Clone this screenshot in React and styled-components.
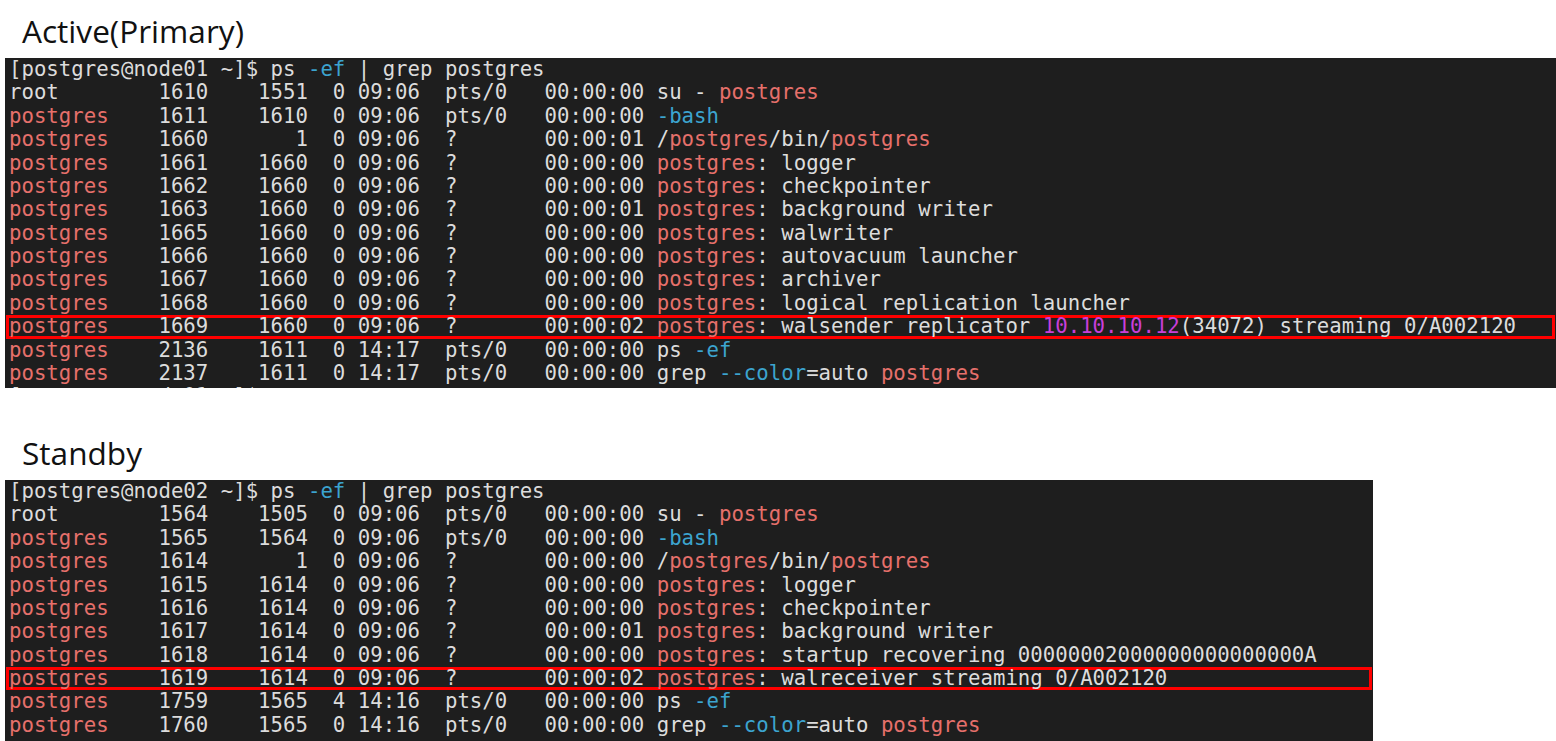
import React from 'react'
import styled, {createGlobalStyle} from 'styled-components'

const GlobalStyle = createGlobalStyle`
    html, body {
        margin: 0;
        padding: 0;
        background: #ffffff;
        overflow: hidden;
    }
`

const Page = styled.div`
    padding-left: 5px;
    display: flex;
    flex-direction: column;
`

const Title = styled.h2`
    margin: ${props => props.$top}px 0 6px 17px;
    font-family: 'Open Sans', 'Noto Sans', sans-serif;
    font-weight: 400;
    font-size: 31.6px;
    line-height: 42px;
    color: #111;
`

const Terminal = styled.div`
    width: ${props => props.$width}px;
    height: ${props => props.$height}px;
    overflow: hidden;
    background: #1e1e1e;
    padding: 0 1px;
    box-sizing: border-box;
    font-family: 'DejaVu Sans Mono', 'Liberation Mono', monospace;
    font-size: 20.7px;
    color: #dcdcdc;
`

const Line = styled.div`
    height: 23.38px;
    line-height: 23.38px;
    padding-left: 3px;
    white-space: pre;
    box-shadow: ${props => props.$highlight ? 'inset 0 0 0 3px #ff0000' : 'none'};
`

const tones = {
    red: '#e6706b',
    cyan: '#3ca4cf',
    pink: '#c93fd9',
}

const Seg = styled.span`
    color: ${props => tones[props.$tone] || 'inherit'};
`

const R = 'red'
const C = 'cyan'
const M = 'pink'

function row(user, pid, ppid, c, stime, tty, time, cmd){
    const rest = pid.padEnd(8) + ppid.padStart(4) + '  ' + c + ' ' + stime + '  ' + tty.padEnd(8) + time + ' '
    return [[user, user === 'postgres' ? R : null], [' '.repeat(12 - user.length) + rest], ...cmd]
}

const pg = (text) => [['postgres', R], [': ' + text]]

const activeLines = [
    {segs: [['[postgres@node01 ~]$ ps '], ['-ef', C], [' | grep postgres']]},
    {segs: row('root', '1610', '1551', '0', '09:06', 'pts/0', '00:00:00', [['su - '], ['postgres', R]])},
    {segs: row('postgres', '1611', '1610', '0', '09:06', 'pts/0', '00:00:00', [['-bash', C]])},
    {segs: row('postgres', '1660', '1', '0', '09:06', '?', '00:00:01', [['/'], ['postgres', R], ['/bin/'], ['postgres', R]])},
    {segs: row('postgres', '1661', '1660', '0', '09:06', '?', '00:00:00', pg('logger'))},
    {segs: row('postgres', '1662', '1660', '0', '09:06', '?', '00:00:00', pg('checkpointer'))},
    {segs: row('postgres', '1663', '1660', '0', '09:06', '?', '00:00:01', pg('background writer'))},
    {segs: row('postgres', '1665', '1660', '0', '09:06', '?', '00:00:00', pg('walwriter'))},
    {segs: row('postgres', '1666', '1660', '0', '09:06', '?', '00:00:00', pg('autovacuum launcher'))},
    {segs: row('postgres', '1667', '1660', '0', '09:06', '?', '00:00:00', pg('archiver'))},
    {segs: row('postgres', '1668', '1660', '0', '09:06', '?', '00:00:00', pg('logical replication launcher'))},
    {segs: row('postgres', '1669', '1660', '0', '09:06', '?', '00:00:02', [['postgres', R], [': walsender replicator '], ['10.10.10.12', M], ['(34072) streaming 0/A002120']]), highlight: true},
    {segs: row('postgres', '2136', '1611', '0', '14:17', 'pts/0', '00:00:00', [['ps '], ['-ef', C]])},
    {segs: row('postgres', '2137', '1611', '0', '14:17', 'pts/0', '00:00:00', [['grep '], ['--color', C], ['=auto '], ['postgres', R]])},
    {segs: [['[postgres@node01 ~]$ ']]},
]

const standbyLines = [
    {segs: [['[postgres@node02 ~]$ ps '], ['-ef', C], [' | grep postgres']]},
    {segs: row('root', '1564', '1505', '0', '09:06', 'pts/0', '00:00:00', [['su - '], ['postgres', R]])},
    {segs: row('postgres', '1565', '1564', '0', '09:06', 'pts/0', '00:00:00', [['-bash', C]])},
    {segs: row('postgres', '1614', '1', '0', '09:06', '?', '00:00:00', [['/'], ['postgres', R], ['/bin/'], ['postgres', R]])},
    {segs: row('postgres', '1615', '1614', '0', '09:06', '?', '00:00:00', pg('logger'))},
    {segs: row('postgres', '1616', '1614', '0', '09:06', '?', '00:00:00', pg('checkpointer'))},
    {segs: row('postgres', '1617', '1614', '0', '09:06', '?', '00:00:01', pg('background writer'))},
    {segs: row('postgres', '1618', '1614', '0', '09:06', '?', '00:00:00', pg('startup recovering 00000002000000000000000A'))},
    {segs: row('postgres', '1619', '1614', '0', '09:06', '?', '00:00:02', pg('walreceiver streaming 0/A002120')), highlight: true},
    {segs: row('postgres', '1759', '1565', '4', '14:16', 'pts/0', '00:00:00', [['ps '], ['-ef', C]])},
    {segs: row('postgres', '1760', '1565', '0', '14:16', 'pts/0', '00:00:00', [['grep '], ['--color', C], ['=auto '], ['postgres', R]])},
]

function Console({lines, width, height}){
    return(
        <Terminal $width={width} $height={height}>
            {lines.map((line, i) => (
                <Line key={i} $highlight={line.highlight}>
                    {line.segs.map(([text, tone], j) => <Seg key={j} $tone={tone}>{text}</Seg>)}
                </Line>
            ))}
        </Terminal>
    )
}

export default function App(){
    return(<>
        <GlobalStyle/>
        <Page>
            <Title $top={10}>Active(Primary)</Title>
            <Console lines={activeLines} width={1551} height={330}/>
            <Title $top={44}>Standby</Title>
            <Console lines={standbyLines} width={1368} height={261}/>
        </Page>
    </>)
}
